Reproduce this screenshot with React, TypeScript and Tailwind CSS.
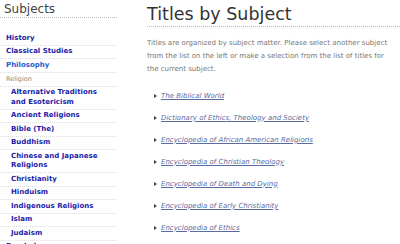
const subjects: { label: string; indent?: boolean; light?: boolean; header?: boolean }[] = [
  { label: "History" },
  { label: "Classical Studies" },
  { label: "Philosophy", light: true },
  { label: "Religion", header: true },
  { label: "Alternative Traditions and Esotericism", indent: true },
  { label: "Ancient Religions", indent: true },
  { label: "Bible (The)", indent: true },
  { label: "Buddhism", indent: true },
  { label: "Chinese and Japanese Religions", indent: true },
  { label: "Christianity", indent: true },
  { label: "Hinduism", indent: true },
  { label: "Indigenous Religions", indent: true },
  { label: "Islam", indent: true },
  { label: "Judaism", indent: true },
  { label: "Psychology" },
]

const titles = [
  "The Biblical World",
  "Dictionary of Ethics, Theology and Society",
  "Encyclopedia of African American Religions",
  "Encyclopedia of Christian Theology",
  "Encyclopedia of Death and Dying",
  "Encyclopedia of Early Christianity",
  "Encyclopedia of Ethics",
]

export default function App() {
  return (
    <div className="flex h-[244px] w-[400px] overflow-hidden bg-white font-['DejaVu_Sans',sans-serif]">
      {/* Sidebar */}
      <div className="w-[117px] shrink-0">
        <div className="border-b border-dotted border-[#bbb] pl-1 pt-[3px] pb-[2px] text-[12px] leading-[12px] text-[#444]">
          Subjects
        </div>
        <ul className="mt-[14px]">
          {subjects.map((s) =>
            s.header ? (
              <li key={s.label} className="border-b border-dotted border-[#ddd] pl-[6px] py-[1.5px] text-[6.5px] leading-[10px] text-[#888]">
                {s.label}
              </li>
            ) : (
              <li
                key={s.label}
                className={`border-b border-dotted border-[#ddd] py-[1.5px] text-[7px] font-bold leading-[9.5px] ${
                  s.indent ? "pl-[11px] pr-4" : "pl-[6px]"
                } ${s.light ? "text-[#2a5ad0]" : "text-[#1c1ca8]"}`}
              >
                {s.label}
              </li>
            )
          )}
        </ul>
      </div>

      {/* Main */}
      <div className="flex-1 pl-[30px]">
        <h1 className="border-b border-dotted border-[#bbb] pt-[6px] pb-[4px] text-[17.5px] leading-[16px] text-[#333]">
          Titles by Subject
        </h1>
        <p className="mt-[10px] pr-[10px] text-[7px] leading-[13px] text-[#777]">
          Titles are organized by subject matter. Please select another subject from the list on the left or make a
          selection from the list of titles for the current subject.
        </p>
        <ul className="mt-[9px] pl-[7px]">
          {titles.map((t) => (
            <li key={t} className="flex h-[22px] items-center gap-[4px]">
              <span className="h-0 w-0 border-y-[2.5px] border-l-[3px] border-y-transparent border-l-[#444]" />
              <span className="text-[7px] italic text-[#5b6aa0] underline">{t}</span>
            </li>
          ))}
        </ul>
      </div>
    </div>
  )
}
